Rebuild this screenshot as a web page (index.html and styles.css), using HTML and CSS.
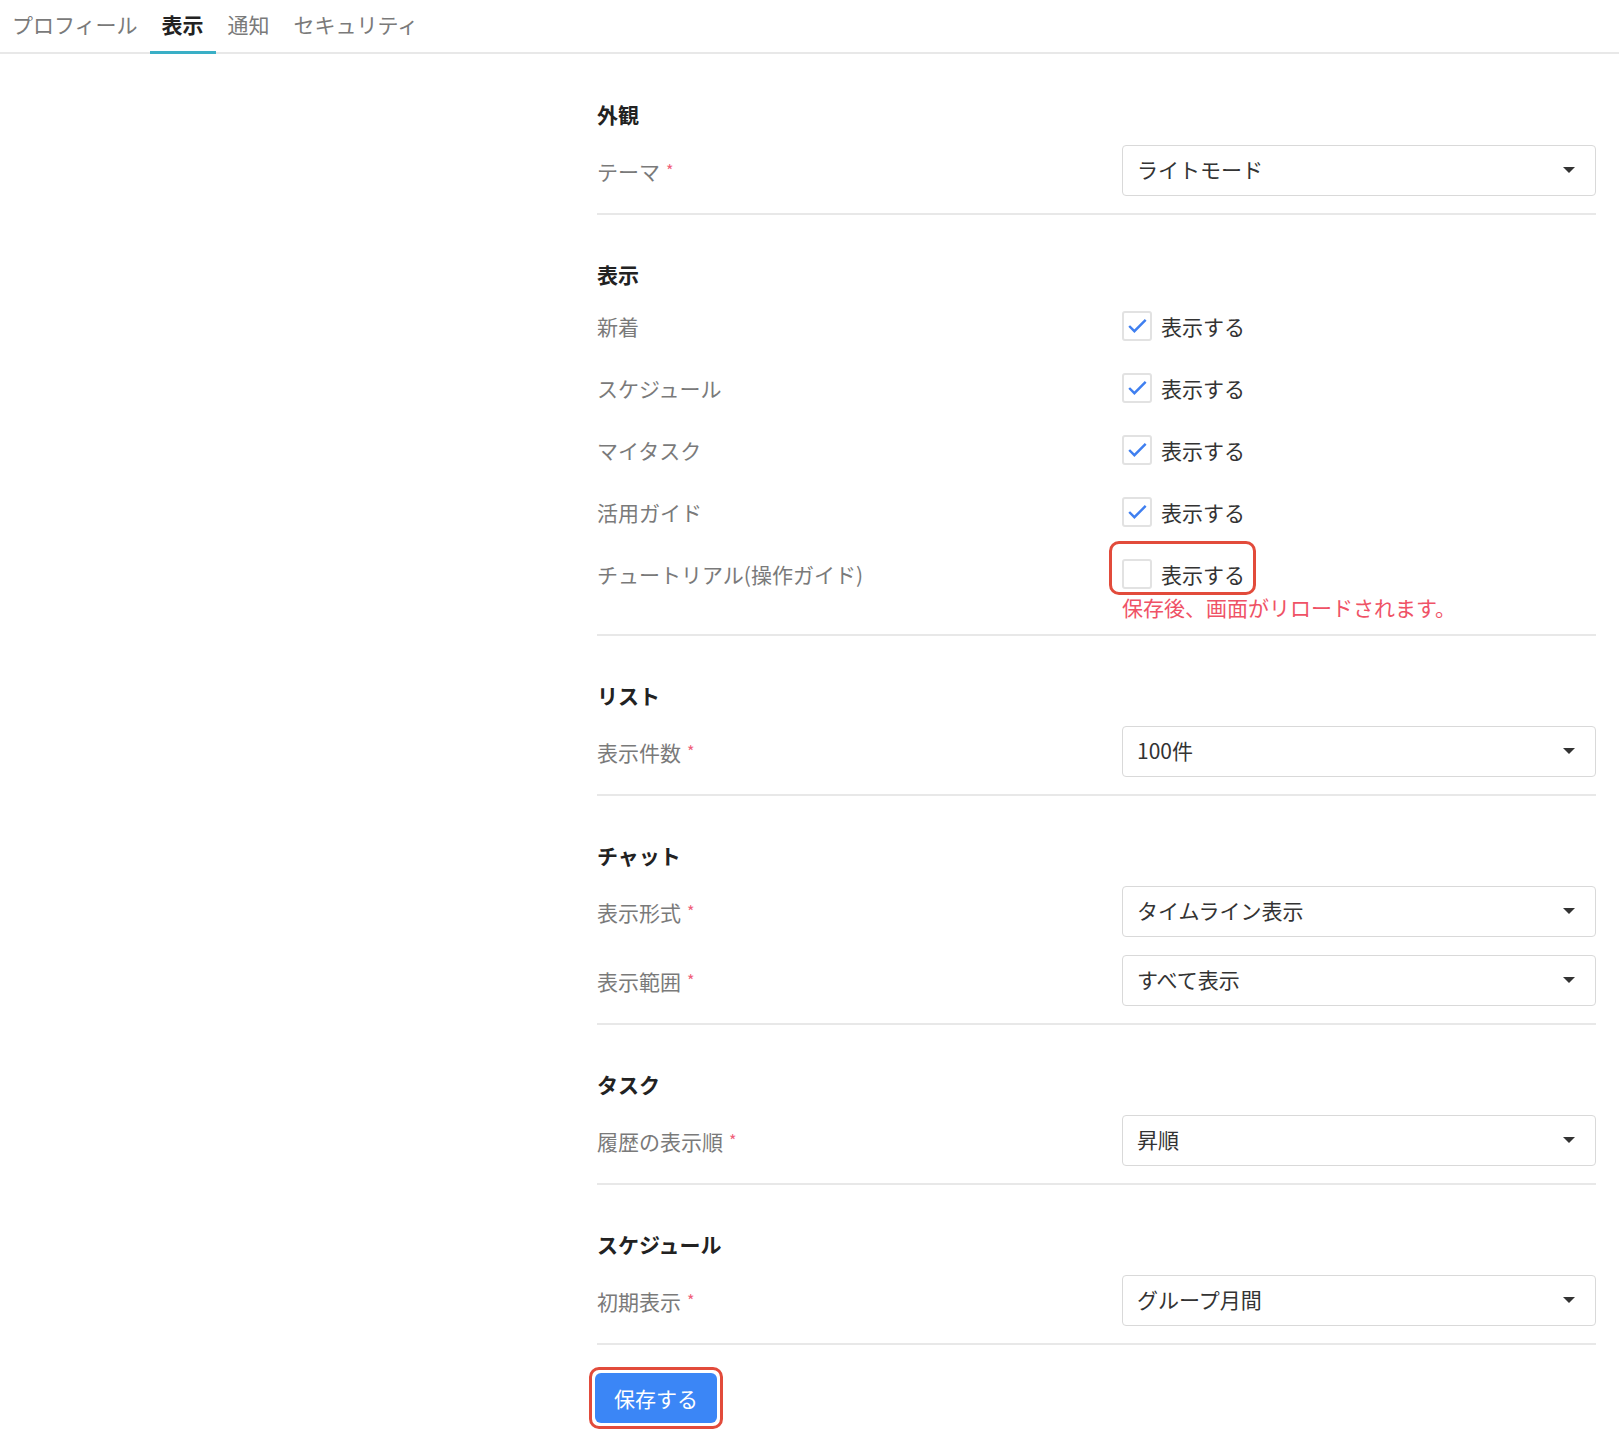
FILE: index.html
```html
<!DOCTYPE html>
<html lang="ja">
<head>
<meta charset="UTF-8">
<meta name="viewport" content="width=device-width, initial-scale=1.0">
<title>表示設定</title>
<link rel="stylesheet" href="styles.css">
</head>
<body>
<div class="tabs">
    <a class="tab">プロフィール</a>
    <a class="tab active">表示</a>
    <a class="tab">通知</a>
    <a class="tab">セキュリティ</a>
</div>

<div class="settings">
    <div class="section">
        <h2>外観</h2>
        <div class="row">
            <label>テーマ<span class="req">*</span></label>
            <div class="select">ライトモード<span class="caret"></span></div>
        </div>
    </div>

    <div class="section">
        <h2>表示</h2>
        <div class="row check-row">
            <label>新着</label>
            <div class="check"><span class="box on"><svg viewBox="0 0 30 30"><polyline points="6,15 12,21 25,8"/></svg></span>表示する</div>
        </div>
        <div class="row check-row">
            <label>スケジュール</label>
            <div class="check"><span class="box on"><svg viewBox="0 0 30 30"><polyline points="6,15 12,21 25,8"/></svg></span>表示する</div>
        </div>
        <div class="row check-row">
            <label>マイタスク</label>
            <div class="check"><span class="box on"><svg viewBox="0 0 30 30"><polyline points="6,15 12,21 25,8"/></svg></span>表示する</div>
        </div>
        <div class="row check-row">
            <label>活用ガイド</label>
            <div class="check"><span class="box on"><svg viewBox="0 0 30 30"><polyline points="6,15 12,21 25,8"/></svg></span>表示する</div>
        </div>
        <div class="row check-row">
            <label>チュートリアル(操作ガイド)</label>
            <div class="check marked"><span class="box"></span>表示する</div>
        </div>
        <div class="row help-row">
            <span></span>
            <p class="help">保存後、画面がリロードされます。</p>
        </div>
    </div>

    <div class="section">
        <h2>リスト</h2>
        <div class="row">
            <label>表示件数<span class="req">*</span></label>
            <div class="select">100件<span class="caret"></span></div>
        </div>
    </div>

    <div class="section">
        <h2>チャット</h2>
        <div class="row">
            <label>表示形式<span class="req">*</span></label>
            <div class="select">タイムライン表示<span class="caret"></span></div>
        </div>
        <div class="row">
            <label>表示範囲<span class="req">*</span></label>
            <div class="select">すべて表示<span class="caret"></span></div>
        </div>
    </div>

    <div class="section">
        <h2>タスク</h2>
        <div class="row">
            <label>履歴の表示順<span class="req">*</span></label>
            <div class="select">昇順<span class="caret"></span></div>
        </div>
    </div>

    <div class="section">
        <h2>スケジュール</h2>
        <div class="row">
            <label>初期表示<span class="req">*</span></label>
            <div class="select">グループ月間<span class="caret"></span></div>
        </div>
    </div>

    <div class="actions">
        <span class="marked-btn"><button class="save">保存する</button></span>
    </div>
</div>
</body>
</html>
```

FILE: styles.css
```css
body {
    margin: 0;
    font-family: "Noto Sans CJK JP", "Noto Sans", sans-serif;
    font-size: 21px;
    color: #333;
    background: #fff;
}
.tabs {
    display: flex;
    padding-left: 0;
    border-bottom: 2px solid #e8e8e8;
}
.tab {
    padding: 9px 12px 12px;
    line-height: 30px;
    color: #7a7a7a;
    border-bottom: 3px solid transparent;
    margin-bottom: -2px;
}
.tab.active {
    color: #222;
    font-weight: bold;
    border-bottom-color: #3aafc6;
}
.settings {
    width: 999px;
    margin-left: 597px;
    padding-top: 1px;
}
.section {
    padding: 44px 0 17px;
    border-bottom: 2px solid #e8e8e8;
}
.section h2 {
    margin: 0 0 16px;
    font-size: 21px;
    line-height: 30px;
    color: #222;
    font-weight: bold;
}
.row {
    display: grid;
    grid-template-columns: 525px 1fr;
    align-items: center;
}
.row + .row {
    margin-top: 18px;
}
.row label {
    color: #7a7a7a;
    line-height: 30px;
}
.req {
    color: #f0607a;
    font-size: 16px;
    margin-left: 6px;
    vertical-align: 3px;
}
.select {
    position: relative;
    height: 51px;
    box-sizing: border-box;
    border: 1px solid #d9d9d9;
    border-radius: 4px;
    padding: 0 14px;
    line-height: 47px;
    color: #333;
}
.caret {
    position: absolute;
    right: 20px;
    top: 21px;
    border-left: 6px solid transparent;
    border-right: 6px solid transparent;
    border-top: 6px solid #333;
}
.check-row {
    padding: 6px 0;
}
.row.check-row + .row.check-row {
    margin-top: 20px;
}
.check {
    position: relative;
    display: flex;
    align-items: center;
    align-self: start;
    width: fit-content;
    line-height: 30px;
    color: #333;
}
.box {
    width: 30px;
    height: 30px;
    box-sizing: border-box;
    border: 2px solid #e2e2e2;
    border-radius: 3px;
    margin-right: 9px;
}
.box svg {
    display: block;
    width: 26px;
    height: 26px;
}
.box polyline {
    fill: none;
    stroke: #3f7ff0;
    stroke-width: 2.8;
}
.check.marked::after {
    content: "";
    position: absolute;
    top: -18px;
    bottom: -6px;
    left: -13px;
    right: -11px;
    border: 3.5px solid #e24b3b;
    border-radius: 10px;
}
.row.help-row {
    margin-top: 0;
    margin-bottom: -2px;
}
.help {
    margin: 0;
    line-height: 24px;
    color: #ef5266;
}
.actions {
    padding-top: 22px;
}
.marked-btn {
    display: inline-block;
    margin-left: -8px;
    padding: 3px;
    border: 3.5px solid #e24b3b;
    border-radius: 10px;
}
.save {
    display: block;
    width: 122px;
    height: 50px;
    border: none;
    border-radius: 6px;
    background: #3b86f6;
    color: #fff;
    font-family: inherit;
    font-size: 21px;
}
```
